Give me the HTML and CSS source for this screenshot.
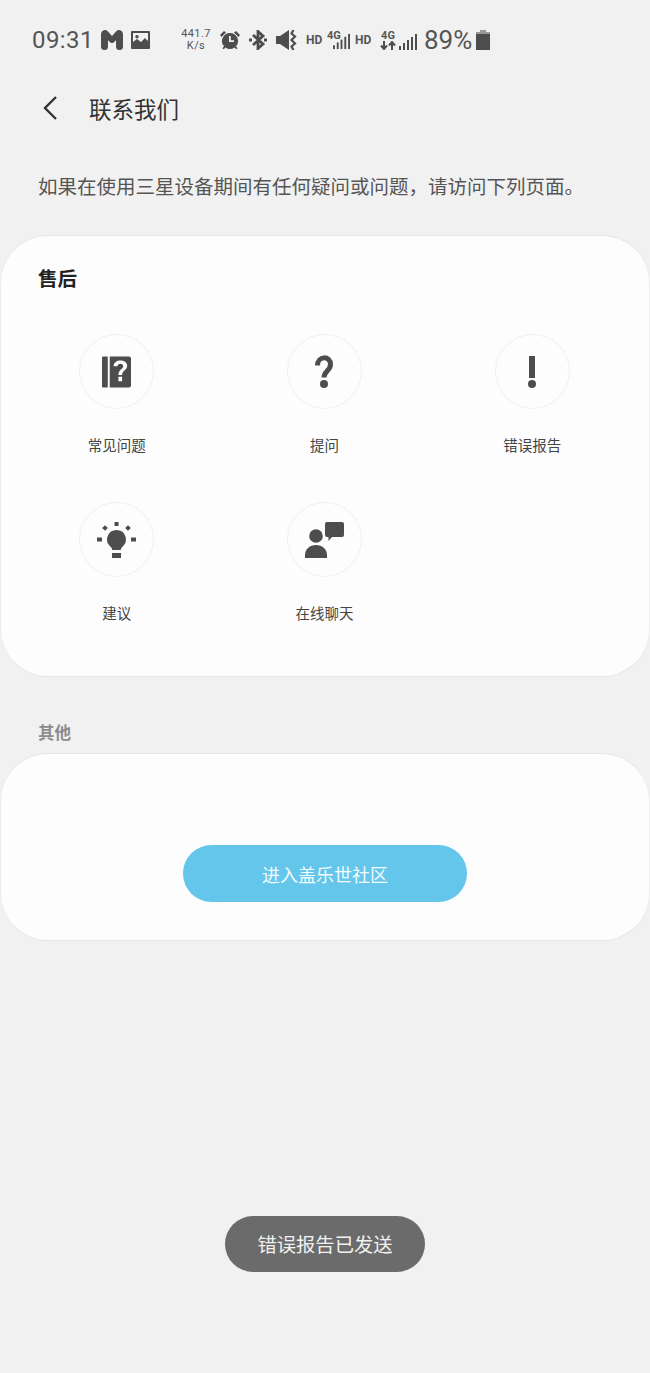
FILE: index.html
```html
<!DOCTYPE html>
<html lang="zh-CN">

<head>
    <meta charset="UTF-8">
    <title>联系我们</title>
    <link rel="stylesheet" href="styles.css">
</head>

<body>
    <div class="status-bar">
        <span class="time">09:31</span>
        <svg class="ic-gmail" viewBox="0 0 22 20"><path d="M0 4a4 4 0 0 1 7-2.600L11 6l4-4.600A4 4 0 0 1 22 4v12.500a3.500 3.500 0 0 1-7 0V10l-1.500 1.800a3.200 3.200 0 0 1-5 0L7 10v6.500a3.500 3.500 0 0 1-7 0z" /></svg>
        <svg class="ic-photo" viewBox="0 0 19 18"><path fill-rule="evenodd" d="M1 0h17a1 1 0 0 1 1 1v16a1 1 0 0 1-1 1H1a1 1 0 0 1-1-1V1a1 1 0 0 1 1-1zm1 2v9l4-3 4 3 4-4 3 3V2zM6 4a1.700 1.700 0 1 1-.01 0z" /></svg>
        <span class="speed">441.7<br>K/s</span>
        <svg class="ic-alarm" viewBox="0 0 20 20"><path fill-rule="evenodd" d="M10 3a8 8 0 0 1 6 13.300l1.500 2-1.300 1-1.600-1.900a8 8 0 0 1-9.200 0l-1.600 1.900-1.300-1 1.500-2A8 8 0 0 1 10 3zM9 6v6h5v-1.700h-3.200V6z" /><path d="M0 5l4-4 2 1.500L1.500 7zM20 5l-4-4-2 1.500L18.500 7z" /></svg>
        <svg class="ic-bt" viewBox="0 0 18 20"><path d="M4 5l10 9-5 4.500v-17l5 4.500-10 9" fill="none" stroke="#4d4d4d" stroke-width="2.800" /><rect x="0" y="8.500" width="3" height="3" /><rect x="15" y="8.500" width="3" height="3" /></svg>
        <svg class="ic-mute" viewBox="0 0 21 20"><path d="M0 6h4l9-6v20l-9-6H0z" /><path d="M17.500 0l-2 3.500 3.500 3-3.500 3.500 3.500 3.500-3.500 3 2 3.500" fill="none" stroke="#4d4d4d" stroke-width="2.200" /></svg>
        <span class="hd hd-first">HD</span>
        <div class="net net-first">
            <span class="net-label">4G</span>
            <svg class="ic-bars-sm" viewBox="0 0 18 16"><rect x="0" y="12" width="2" height="4" /><rect x="4" y="9" width="2" height="7" /><rect x="8" y="6" width="2" height="10" /><rect x="12" y="3" width="2" height="13" /><rect x="16" y="0" width="2" height="16" /></svg>
        </div>
        <span class="hd hd-second">HD</span>
        <div class="net-arrows">
            <span class="net-label">4G</span>
            <svg class="ic-arrows" viewBox="0 0 16 9"><path d="M4 0v7M1 4.500L4 8l3-3.500M12 9V2M9 4.500L12 1l3 3.500" fill="none" stroke="#4d4d4d" stroke-width="2" /></svg>
        </div>
        <svg class="ic-bars" viewBox="0 0 18 16"><rect x="0" y="12" width="2" height="4" /><rect x="4" y="9" width="2" height="7" /><rect x="8" y="6" width="2" height="10" /><rect x="12" y="3" width="2" height="13" /><rect x="16" y="0" width="2" height="16" /></svg>
        <span class="battery-text">89%</span>
        <svg class="ic-battery" viewBox="0 0 14 20"><rect x="4" y="0" width="6" height="2" fill="#999" /><rect x="0" y="2" width="14" height="2" fill="#999" /><rect x="0" y="4" width="14" height="16" /></svg>
    </div>

    <header class="top-bar">
        <svg class="back" viewBox="0 0 18 26"><path d="M15 2L4 13l11 11" fill="none" stroke="#333" stroke-width="2.400" /></svg>
        <h1>联系我们</h1>
    </header>

    <p class="intro">如果在使用三星设备期间有任何疑问或问题，请访问下列页面。</p>

    <section class="card card-service">
        <h2>售后</h2>
        <div class="grid">
            <div class="item">
                <div class="circle">
                    <svg viewBox="0 0 30 32" width="29" height="32"><rect x="0" y="0" width="6" height="32" rx="1" /><path fill-rule="evenodd" d="M8 0h20a2 2 0 0 1 2 2v28a2 2 0 0 1-2 2H8zm4 10h4c0-3.500 6-3.500 6 0 0 2.500-5 3.500-5 9h3.800c0-4.500 5.200-5 5.200-9.500 0-7-14-7.500-14 .5zm5 11v4.500h3.800V21z" /></svg>
                </div>
                <span>常见问题</span>
            </div>
            <div class="item">
                <div class="circle">
                    <svg viewBox="0 0 18 33" width="18" height="33"><path d="M2.500 10.500C2.500 .5 15.500 .5 15.500 9.500c0 6-6.500 6.500-6.500 13" fill="none" stroke="#4d4d4d" stroke-width="5" /><circle cx="9" cy="29" r="4" /></svg>
                </div>
                <span>提问</span>
            </div>
            <div class="item">
                <div class="circle">
                    <svg viewBox="0 0 8 32" width="8" height="32"><rect x="1" y="0" width="6" height="22" /><circle cx="4" cy="28" r="4" /></svg>
                </div>
                <span>错误报告</span>
            </div>
            <div class="item">
                <div class="circle">
                    <svg viewBox="0 0 39 36" width="39" height="36"><rect x="17.500" y="0" width="4" height="4" /><rect x="0" y="15.500" width="5" height="4" /><rect x="34" y="15.500" width="5" height="4" /><rect x="6" y="4" width="4" height="4" transform="rotate(45 8 6)" /><rect x="29" y="4" width="4" height="4" transform="rotate(45 31 6)" /><path d="M19.500 8a9.500 9.500 0 0 1 6 16.800c-1.200 1-1.700 1.700-1.700 3.200h-8.600c0-1.500-.5-2.200-1.700-3.200A9.500 9.500 0 0 1 19.500 8z" /><rect x="15" y="31" width="9" height="5" /></svg>
                </div>
                <span>建议</span>
            </div>
            <div class="item">
                <div class="circle">
                    <svg viewBox="0 0 40 36" width="40" height="36"><circle cx="12" cy="14" r="6.800" /><path d="M1 36v-3c0-6 5-10 11-10s11 4 11 10v3z" /><path d="M21 2a2 2 0 0 1 2-2h15a2 2 0 0 1 2 2v11a2 2 0 0 1-2 2H28l-3.500 4v-4H23a2 2 0 0 1-2-2z" /></svg>
                </div>
                <span>在线聊天</span>
            </div>
        </div>
    </section>

    <h3 class="other-title">其他</h3>

    <section class="card card-other">
        <button class="community-button">进入盖乐世社区</button>
    </section>

    <div class="toast">错误报告已发送</div>
</body>

</html>
```

FILE: styles.css
```css
body {
    font-family: "Noto Sans CJK SC", "Noto Sans", sans-serif;
    margin: 0;
    padding: 0;
    width: 650px;
    height: 1373px;
    background-color: #f1f1f1;
    color: #333;
    position: relative;
    overflow: hidden;
}

svg {
    display: block;
    fill: #4d4d4d;
    flex-shrink: 0;
}

/* status bar */
.status-bar {
    display: flex;
    align-items: center;
    height: 40px;
    padding: 20px 0 0 32px;
    color: #555;
    font-family: Roboto, sans-serif;
}

.time {
    font-size: 24px;
    width: 60px;
    letter-spacing: 0.4px;
    white-space: nowrap;
}

.ic-gmail {
    width: 22px;
    height: 20px;
    margin-left: 9px;
}

.ic-photo {
    width: 19px;
    height: 18px;
    margin-left: 8px;
}

.speed {
    width: 32px;
    margin-left: 30px;
    font-size: 11px;
    line-height: 12px;
    text-align: center;
    letter-spacing: 0.4px;
}

.ic-alarm {
    width: 20px;
    height: 20px;
    margin-left: 8px;
}

.ic-bt {
    width: 18px;
    height: 20px;
    margin-left: 9px;
}

.ic-mute {
    width: 21px;
    height: 20px;
    margin-left: 9px;
}

.hd {
    font-size: 12px;
    font-weight: 700;
    width: 17px;
    white-space: nowrap;
}

.hd-first {
    margin-left: 9px;
}

.hd-second {
    margin-left: 5px;
}

.net {
    position: relative;
    width: 23px;
    height: 20px;
    margin-left: 4px;
}

.net-label {
    display: block;
    font-size: 11px;
    font-weight: 700;
    line-height: 11px;
}

.net .ic-bars-sm {
    position: absolute;
    right: 0;
    bottom: 0;
    width: 17px;
    height: 17px;
}

.net-arrows {
    width: 16px;
    margin-left: 8px;
    text-align: center;
}

.ic-arrows {
    width: 16px;
    height: 9px;
}

.ic-bars {
    width: 18px;
    height: 16px;
    margin: 3px 0 0 3px;
}

.battery-text {
    font-size: 26px;
    width: 48px;
    margin-left: 7px;
    white-space: nowrap;
}

.ic-battery {
    width: 14px;
    height: 20px;
    margin-left: 4px;
}

/* top */
.top-bar {
    display: flex;
    align-items: center;
    height: 44px;
    margin-top: 26px;
    padding-left: 41px;
}

.back {
    width: 18px;
    height: 26px;
}

.top-bar h1 {
    margin: 0 0 0 30px;
    font-size: 22.5px;
    font-weight: 400;
    color: #333;
}

.intro {
    margin: 41px 0 0 38px;
    height: 30px;
    font-size: 19.5px;
    line-height: 30px;
    color: #555;
    white-space: nowrap;
}

.card {
    background-color: #fdfdfd;
    border: 1px solid #e6e6e6;
    border-left-color: #ececec;
    border-right-color: #ececec;
    border-radius: 48px;
    box-sizing: border-box;
    width: 650px;
}

.card-service {
    height: 442px;
    margin-top: 34px;
    padding: 28px 13px 0 12px;
}

.card-service h2 {
    margin: 0 0 0 25px;
    font-size: 19.5px;
    line-height: 28px;
    font-weight: 700;
    color: #222;
}

.grid {
    display: grid;
    grid-template-columns: repeat(3, 1fr);
    grid-auto-rows: 168px;
    margin-top: 42px;
}

.item {
    display: flex;
    flex-direction: column;
    align-items: center;
}

.circle {
    display: flex;
    align-items: center;
    justify-content: center;
    box-sizing: border-box;
    width: 75px;
    height: 75px;
    border: 1.500px solid #f0f0f0;
    border-radius: 50%;
}

.item span {
    margin-top: 25px;
    font-size: 14.500px;
    line-height: 22px;
    color: #444;
}

.other-title {
    margin: 43px 0 0 38px;
    height: 33px;
    font-size: 16.500px;
    line-height: 24px;
    font-weight: 700;
    color: #8c8c8c;
}

.card-other {
    display: flex;
    justify-content: center;
    height: 188px;
    padding-top: 91px;
}

.community-button {
    width: 284px;
    height: 57px;
    border: none;
    border-radius: 29px;
    background-color: #63c6ea;
    color: #f3fbfe;
    font-family: inherit;
    font-size: 18px;
    padding: 0;
}

/* toast sits over the page */
.toast {
    position: absolute;
    left: 225px;
    top: 1216px;
    width: 200px;
    height: 56px;
    border-radius: 28px;
    background-color: #6b6b6b;
    color: #f2f2f2;
    font-size: 19.300px;
    line-height: 56px;
    text-align: center;
}
```
